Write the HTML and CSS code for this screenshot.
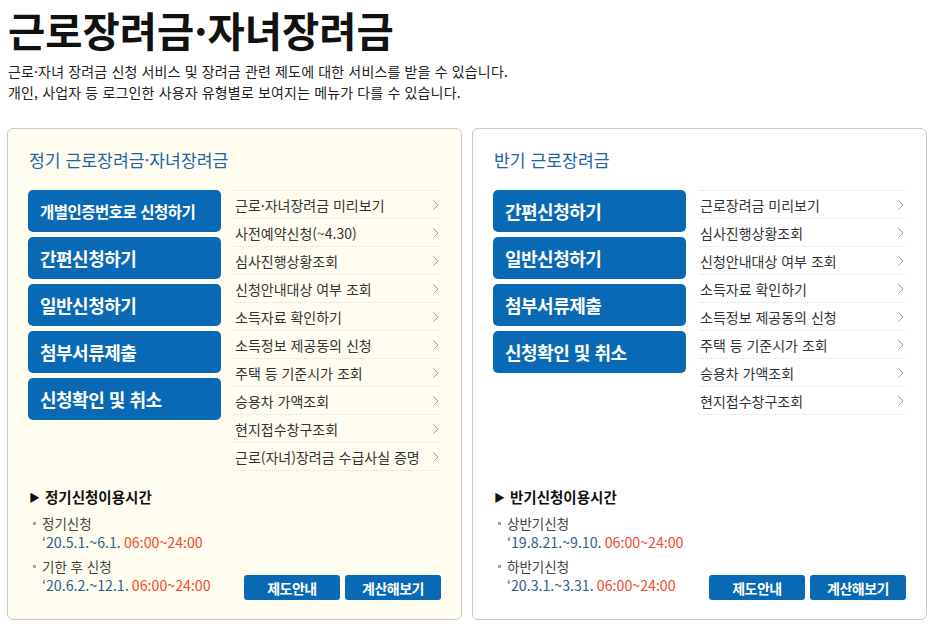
FILE: index.html
```html
<!DOCTYPE html>
<html lang="ko">
<head>
<meta charset="utf-8">
<title>근로장려금·자녀장려금</title>
<link rel="stylesheet" href="styles.css">
</head>
<body>
<div class="page">
  <h1 class="title">근로장려금·자녀장려금</h1>
  <p class="desc">근로·자녀 장려금 신청 서비스 및 장려금 관련 제도에 대한 서비스를 받을 수 있습니다.<br>개인, 사업자 등 로그인한 사용자 유형별로 보여지는 메뉴가 다를 수 있습니다.</p>

  <div class="panels">
    <section class="panel panel-cream">
      <h2 class="panel-title">정기 근로장려금·자녀장려금</h2>
      <div class="panel-body">
        <div class="btns">
          <a class="big-btn small-text">개별인증번호로 신청하기</a>
          <a class="big-btn">간편신청하기</a>
          <a class="big-btn">일반신청하기</a>
          <a class="big-btn">첨부서류제출</a>
          <a class="big-btn">신청확인 및 취소</a>
        </div>
        <ul class="links">
          <li><span>근로·자녀장려금 미리보기</span><svg class="chev" viewBox="0 0 6 10"><polyline points="0.5,0.5 5,5 0.5,9.5"/></svg></li>
          <li><span>사전예약신청(~4.30)</span><svg class="chev" viewBox="0 0 6 10"><polyline points="0.5,0.5 5,5 0.5,9.5"/></svg></li>
          <li><span>심사진행상황조회</span><svg class="chev" viewBox="0 0 6 10"><polyline points="0.5,0.5 5,5 0.5,9.5"/></svg></li>
          <li><span>신청안내대상 여부 조회</span><svg class="chev" viewBox="0 0 6 10"><polyline points="0.5,0.5 5,5 0.5,9.5"/></svg></li>
          <li><span>소득자료 확인하기</span><svg class="chev" viewBox="0 0 6 10"><polyline points="0.5,0.5 5,5 0.5,9.5"/></svg></li>
          <li><span>소득정보 제공동의 신청</span><svg class="chev" viewBox="0 0 6 10"><polyline points="0.5,0.5 5,5 0.5,9.5"/></svg></li>
          <li><span>주택 등 기준시가 조회</span><svg class="chev" viewBox="0 0 6 10"><polyline points="0.5,0.5 5,5 0.5,9.5"/></svg></li>
          <li><span>승용차 가액조회</span><svg class="chev" viewBox="0 0 6 10"><polyline points="0.5,0.5 5,5 0.5,9.5"/></svg></li>
          <li><span>현지접수창구조회</span><svg class="chev" viewBox="0 0 6 10"><polyline points="0.5,0.5 5,5 0.5,9.5"/></svg></li>
          <li><span>근로(자녀)장려금 수급사실 증명</span><svg class="chev" viewBox="0 0 6 10"><polyline points="0.5,0.5 5,5 0.5,9.5"/></svg></li>
        </ul>
      </div>
      <div class="panel-foot">
        <div class="info">
          <h3 class="info-title"><span class="tri">▶</span>정기신청이용시간</h3>
          <ul class="info-list">
            <li><span class="label">정기신청</span><span class="date">‘20.5.1.~6.1. <em>06:00~24:00</em></span></li>
            <li><span class="label">기한 후 신청</span><span class="date">‘20.6.2.~12.1. <em>06:00~24:00</em></span></li>
          </ul>
        </div>
        <div class="foot-btns">
          <a class="sm-btn">제도안내</a>
          <a class="sm-btn">계산해보기</a>
        </div>
      </div>
    </section>

    <section class="panel panel-white">
      <h2 class="panel-title">반기 근로장려금</h2>
      <div class="panel-body">
        <div class="btns">
          <a class="big-btn">간편신청하기</a>
          <a class="big-btn">일반신청하기</a>
          <a class="big-btn">첨부서류제출</a>
          <a class="big-btn">신청확인 및 취소</a>
        </div>
        <ul class="links">
          <li><span>근로장려금 미리보기</span><svg class="chev" viewBox="0 0 6 10"><polyline points="0.5,0.5 5,5 0.5,9.5"/></svg></li>
          <li><span>심사진행상황조회</span><svg class="chev" viewBox="0 0 6 10"><polyline points="0.5,0.5 5,5 0.5,9.5"/></svg></li>
          <li><span>신청안내대상 여부 조회</span><svg class="chev" viewBox="0 0 6 10"><polyline points="0.5,0.5 5,5 0.5,9.5"/></svg></li>
          <li><span>소득자료 확인하기</span><svg class="chev" viewBox="0 0 6 10"><polyline points="0.5,0.5 5,5 0.5,9.5"/></svg></li>
          <li><span>소득정보 제공동의 신청</span><svg class="chev" viewBox="0 0 6 10"><polyline points="0.5,0.5 5,5 0.5,9.5"/></svg></li>
          <li><span>주택 등 기준시가 조회</span><svg class="chev" viewBox="0 0 6 10"><polyline points="0.5,0.5 5,5 0.5,9.5"/></svg></li>
          <li><span>승용차 가액조회</span><svg class="chev" viewBox="0 0 6 10"><polyline points="0.5,0.5 5,5 0.5,9.5"/></svg></li>
          <li><span>현지접수창구조회</span><svg class="chev" viewBox="0 0 6 10"><polyline points="0.5,0.5 5,5 0.5,9.5"/></svg></li>
        </ul>
      </div>
      <div class="panel-foot">
        <div class="info">
          <h3 class="info-title"><span class="tri">▶</span>반기신청이용시간</h3>
          <ul class="info-list">
            <li><span class="label">상반기신청</span><span class="date">‘19.8.21.~9.10. <em>06:00~24:00</em></span></li>
            <li><span class="label">하반기신청</span><span class="date">‘20.3.1.~3.31. <em>06:00~24:00</em></span></li>
          </ul>
        </div>
        <div class="foot-btns">
          <a class="sm-btn">제도안내</a>
          <a class="sm-btn">계산해보기</a>
        </div>
      </div>
    </section>
  </div>
</div>
</body>
</html>
```

FILE: styles.css
```css
* { box-sizing: border-box; }
html, body { margin: 0; padding: 0; background: #fff; }
body {
  font-family: "Noto Sans CJK KR", "Noto Sans", sans-serif;
  color: #222;
}
.page { padding: 0 8px 0 7px; width: 935px; }
.title {
  margin: 0 0 0 1px;
  font-size: 40.5px;
  font-weight: 700;
  line-height: 59px;
  letter-spacing: 0;
  color: #111;
}
.desc {
  margin: 2px 0 0 1px;
  font-size: 14px;
  line-height: 21px;
  letter-spacing: 0.15px;
  color: #222;
}
.panels {
  margin-top: 25px;
  display: grid;
  grid-template-columns: 455px 455px;
  column-gap: 10px;
}
.panel {
  height: 492px;
  border: 1px solid #c8c8c8;
  border-radius: 6px;
  padding: 18px 20px 19px 20px;
  display: flex;
  flex-direction: column;
}
.panel-cream { background: #fffdf0; }
.panel-white { background: #fff; }
.panel-title {
  margin: 0 0 17px 1px;
  font-size: 17.2px;
  line-height: 26px;
  font-weight: 400;
  color: #1e63a6;
  letter-spacing: 0;
}
.panel-body {
  display: flex;
  gap: 13px;
}
.btns {
  width: 193px;
  display: flex;
  flex-direction: column;
  gap: 5px;
}
.big-btn {
  display: flex;
  align-items: center;
  height: 42px;
  padding-left: 12px;
  background: #0a69b5;
  border-radius: 5px;
  color: #fff;
  font-size: 18px;
  font-weight: 700;
  letter-spacing: -0.5px;
}
.big-btn.small-text { font-size: 15.5px; }
.links {
  list-style: none;
  margin: 0;
  padding: 0;
  width: 207px;
  border-top: 1px dotted #dedede;
}
.links li {
  height: 28px;
  border-bottom: 1px dotted #dedede;
  display: flex;
  align-items: center;
  justify-content: space-between;
  padding: 0 2px 0 1px;
  font-size: 14px;
  color: #333;
  letter-spacing: 0;
}
.chev {
  width: 6px;
  height: 10px;
  fill: none;
  stroke: #9a9a9a;
  stroke-width: 1;
}
.panel-foot {
  margin-top: auto;
  display: flex;
  justify-content: space-between;
  align-items: flex-end;
}
.info-title {
  margin: 0 0 7px 1px;
  font-size: 14.5px;
  line-height: 20px;
  font-weight: 700;
  color: #111;
}
.tri { font-size: 11px; margin-right: 5px; vertical-align: 1px; }
.info-list {
  list-style: none;
  margin: 0;
  padding: 0 0 5px 0;
}
.info-list li {
  position: relative;
  padding-left: 14px;
  margin-top: 5px;
  line-height: 19px;
}
.info-list li:first-child { margin-top: 3px; }
.info-list li::before {
  content: "";
  position: absolute;
  left: 5px;
  top: 8px;
  width: 3px;
  height: 3px;
  background: #a8a8a8;
}
.label { display: block; color: #444; font-size: 13.5px; }
.date { display: block; color: #2e5e8e; font-size: 14.2px; }
.date em { font-style: normal; color: #f0472b; }
.foot-btns { display: flex; gap: 5px; }
.sm-btn {
  display: flex;
  align-items: center;
  justify-content: center;
  width: 96px;
  height: 25px;
  background: #0a69b5;
  border-radius: 3px;
  color: #fff;
  font-size: 14px;
  font-weight: 700;
  letter-spacing: -0.5px;
}
```
